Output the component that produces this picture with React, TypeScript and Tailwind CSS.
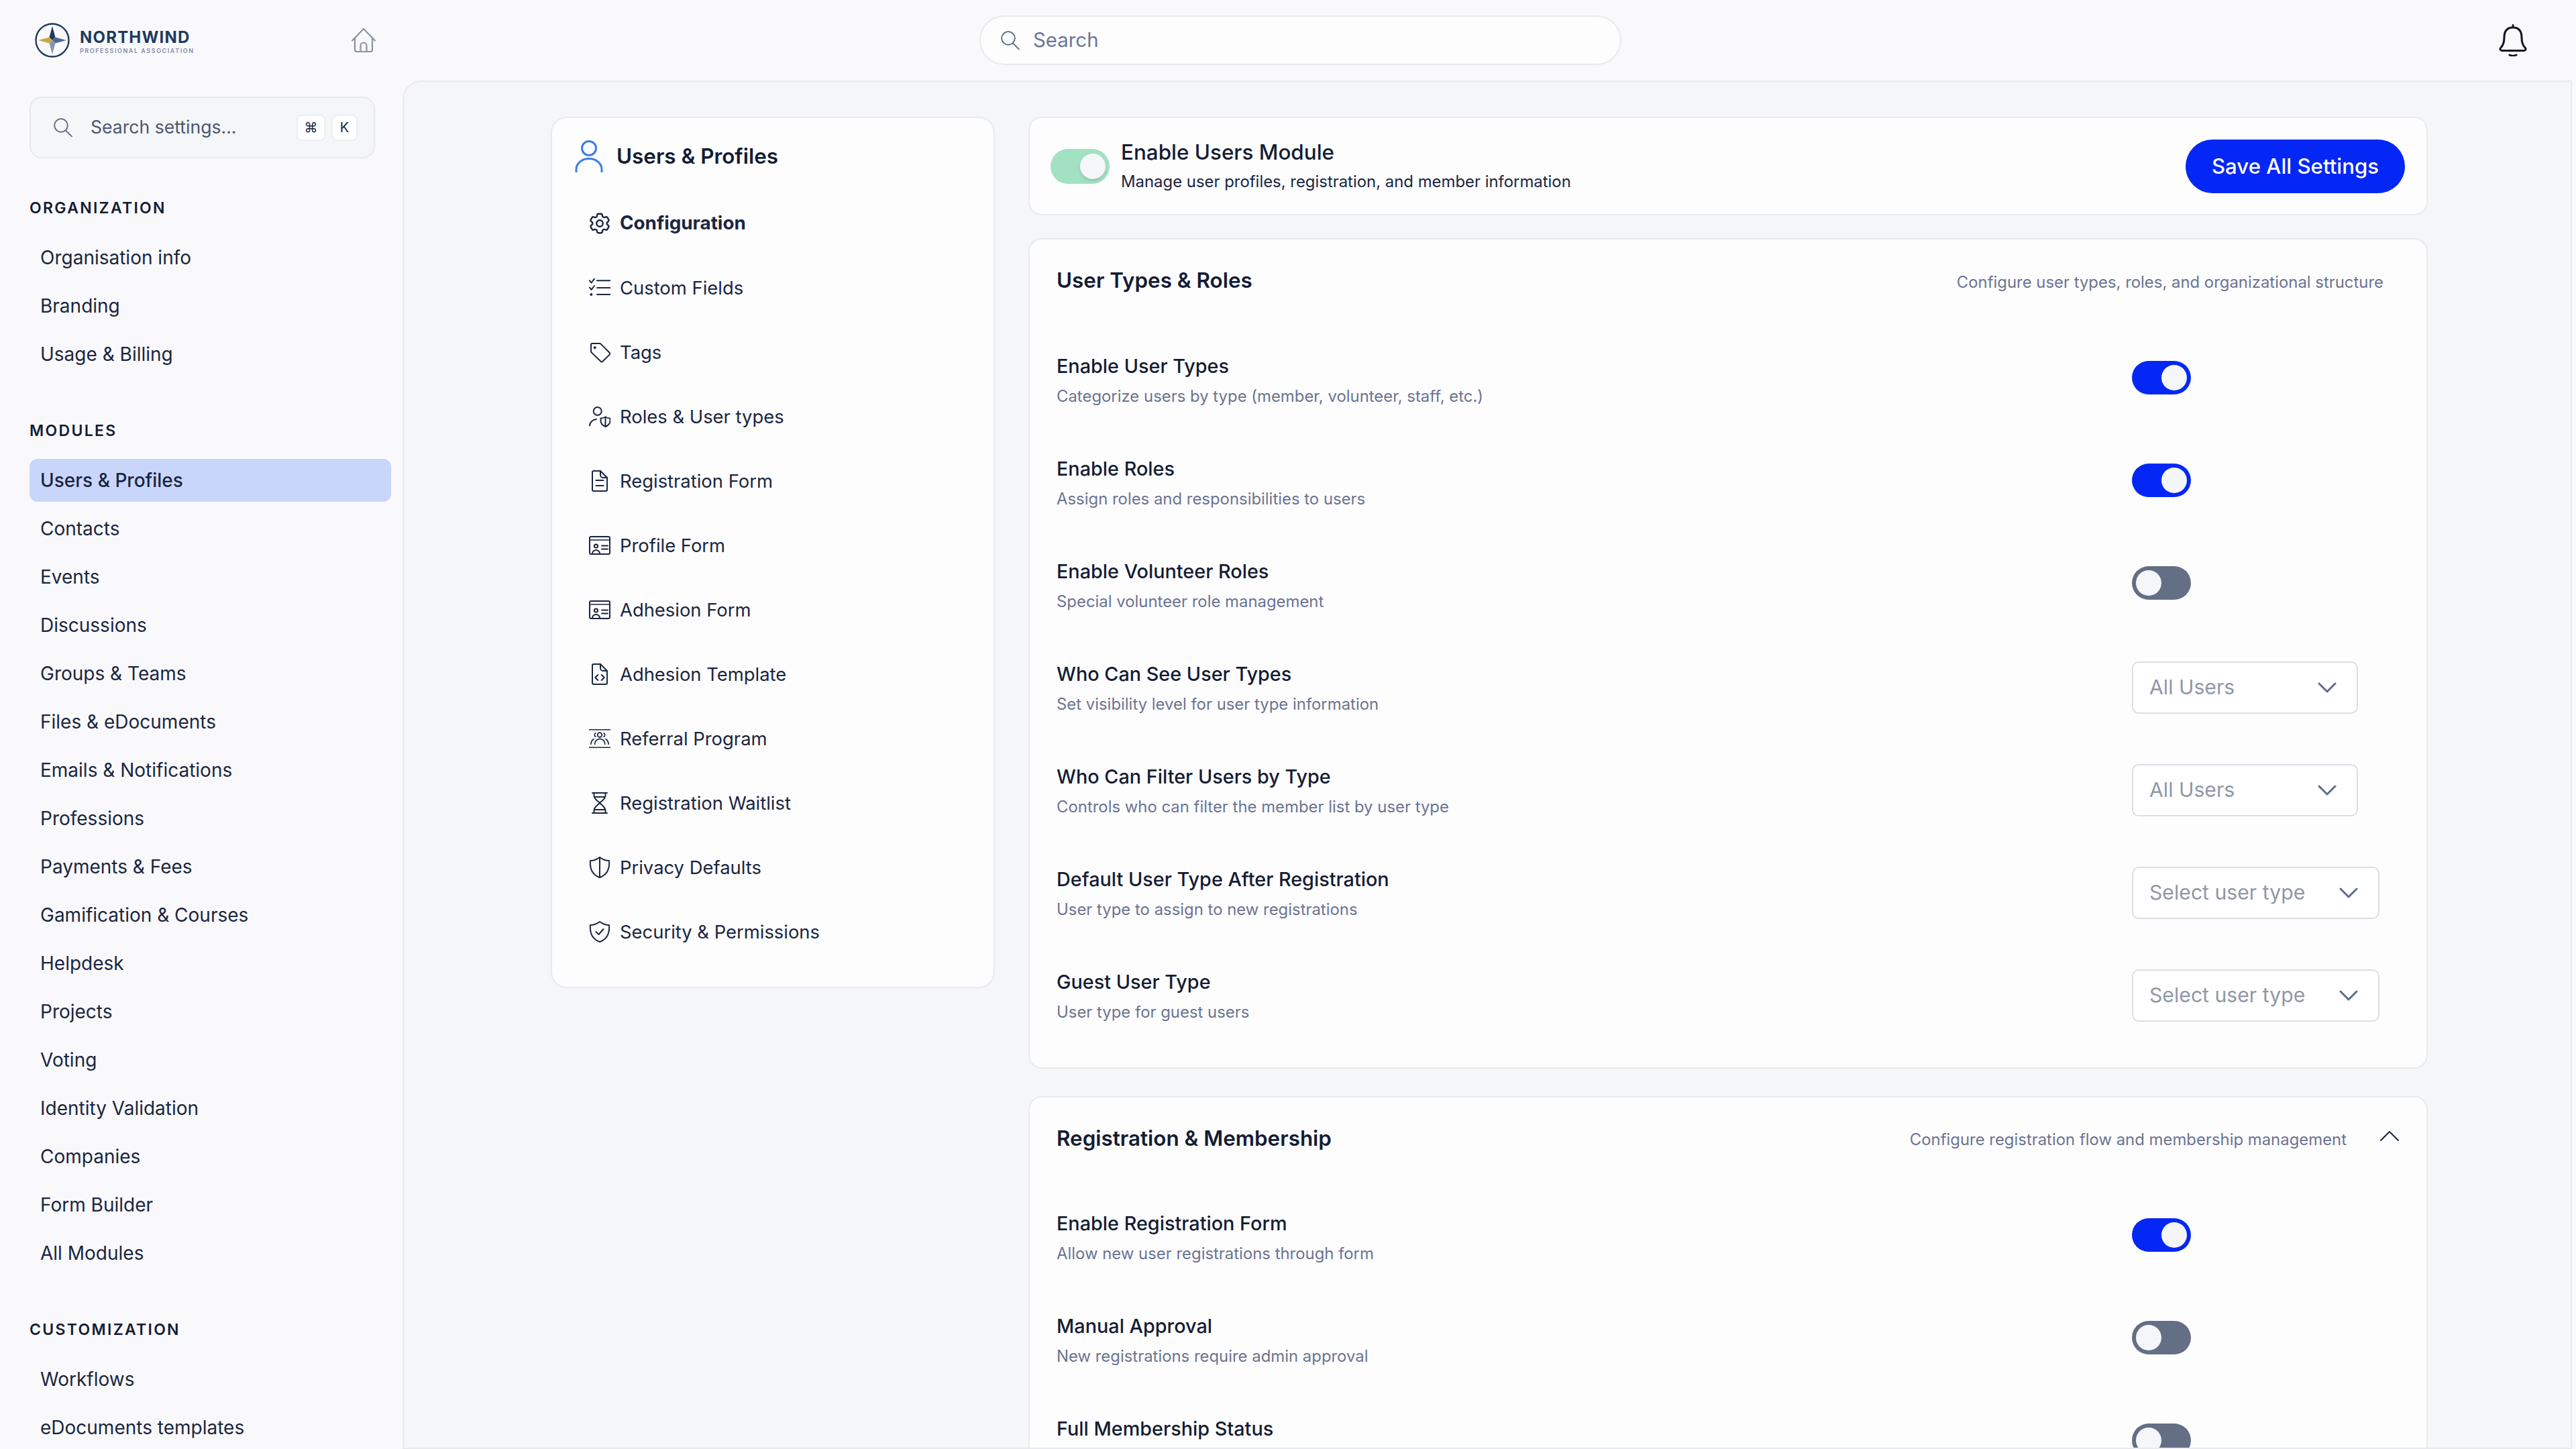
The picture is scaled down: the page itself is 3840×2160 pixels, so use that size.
import type { ReactNode } from "react";
import { HiOutlineCog6Tooth } from "react-icons/hi2";

const orgItems = ["Organisation info", "Branding", "Usage & Billing"];
const moduleItems = [
  "Users & Profiles",
  "Contacts",
  "Events",
  "Discussions",
  "Groups & Teams",
  "Files & eDocuments",
  "Emails & Notifications",
  "Professions",
  "Payments & Fees",
  "Gamification & Courses",
  "Helpdesk",
  "Projects",
  "Voting",
  "Identity Validation",
  "Companies",
  "Form Builder",
  "All Modules",
];
const customItems = ["Workflows", "eDocuments templates"];

function Glyph({ children }: { children: ReactNode }) {
  return (
    <svg viewBox="0 0 32 32" fill="none" stroke="#1a2640" strokeWidth="2" strokeLinecap="round" strokeLinejoin="round" className="h-[32px] w-[32px] shrink-0">
      {children}
    </svg>
  );
}

const docOutline = (
  <>
    <path d="M7 1h10l10 10v18a2 2 0 0 1-2 2H7a2 2 0 0 1-2-2V3a2 2 0 0 1 2-2z" />
    <path d="M17 1v6a4 4 0 0 0 4 4h6" />
  </>
);
const idCard = (
  <>
    <rect x="1" y="3" width="30" height="26" rx="2" />
    <path d="M1 8h30" strokeWidth="1.4" />
    <circle cx="10.5" cy="17" r="2.6" />
    <path d="M5 28a5.5 5 0 0 1 11 0M19 16.5h9M19 21.5h9" />
  </>
);
const shieldOutline = "M16 1C20 4 25 6 30 6C31 18 27 27 16 31C5 27 1 18 2 6C7 6 12 4 16 1Z";

const navItems: { label: string; icon: ReactNode; bold?: boolean }[] = [
  { label: "Configuration", bold: true, icon: <HiOutlineCog6Tooth className="h-[38px] w-[38px] shrink-0 -mx-[3px] text-[#1a2640]" /> },
  {
    label: "Custom Fields",
    icon: (
      <Glyph>
        <path d="M12 5.3h20M12 16h20M12 26h20M1 5.3l2.5 3.2L8 2.7M1 15.5l2.5 3.3L8 13" />
        <circle cx="3.4" cy="26" r="1" fill="#1a2640" />
      </Glyph>
    ),
  },
  {
    label: "Tags",
    icon: (
      <Glyph>
        <path d="M5 3h11a2 2 0 0 1 1.4.6l13.2 13.2a2 2 0 0 1 0 2.8l-10.2 10.2a2 2 0 0 1-2.8 0L3.6 16.4A2 2 0 0 1 3 15V5a2 2 0 0 1 2-2z" />
        <circle cx="8.7" cy="9.3" r="1" fill="#1a2640" />
      </Glyph>
    ),
  },
  {
    label: "Roles & User types",
    icon: (
      <Glyph>
        <circle cx="12.7" cy="8" r="6" />
        <path d="M1 29.5a11 10 0 0 1 10-9.5" />
        <path d="M24.5 16.5C27 18 29 18.6 31.5 18.5V22C31.5 27 28 29.5 24.5 31C21 29.5 17.5 27 17.5 22V18.5C20 18.6 22 18 24.5 16.5ZM24.5 16.5V31" />
      </Glyph>
    ),
  },
  {
    label: "Registration Form",
    icon: (
      <Glyph>
        {docOutline}
        <path d="M10.5 15h11M10.5 23h11" />
      </Glyph>
    ),
  },
  { label: "Profile Form", icon: <Glyph>{idCard}</Glyph> },
  { label: "Adhesion Form", icon: <Glyph>{idCard}</Glyph> },
  {
    label: "Adhesion Template",
    icon: (
      <Glyph>
        {docOutline}
        <path d="M13.3 17l-4 4 4 4M18.7 17l4 4-4 4" />
      </Glyph>
    ),
  },
  {
    label: "Referral Program",
    icon: (
      <Glyph>
        <path d="M0 2.7h32M0 29.3h32" strokeWidth="1.4" />
        <g strokeWidth="1.7">
          <circle cx="16" cy="10.5" r="3.3" />
          <path d="M8.7 24.3a7.5 8 0 0 1 15 0M10 7.8a3 3 0 0 0 0 5.4M22 7.8a3 3 0 0 1 0 5.4M3 24.3c0-3.5 1.5-6 4-7.6M29 24.3c0-3.5-1.5-6-4-7.6" />
        </g>
      </Glyph>
    ),
  },
  {
    label: "Registration Waitlist",
    icon: (
      <Glyph>
        <path d="M5 1h22M5 31h22M7.5 1v4c0 5 5.5 8 8.5 11 3-3 8.5-6 8.5-11V1M7.5 31v-4c0-5 5.5-8 8.5-11 3 3 8.5 6 8.5 11v4M8 7h16M8 26h16" />
      </Glyph>
    ),
  },
  {
    label: "Privacy Defaults",
    icon: (
      <Glyph>
        <path d={shieldOutline} />
        <path d="M16 1v30" />
      </Glyph>
    ),
  },
  {
    label: "Security & Permissions",
    icon: (
      <Glyph>
        <path d={shieldOutline} />
        <path d="M10.5 16l4 4 7-8" />
      </Glyph>
    ),
  },
];

function SearchIcon({ className }: { className: string }) {
  return (
    <svg viewBox="0 0 28 28" fill="none" stroke="currentColor" strokeWidth="1.8" strokeLinecap="round" className={className}>
      <circle cx="11" cy="11" r="9.8" />
      <path d="M18 18.5l9 9" />
    </svg>
  );
}

function Logo() {
  return (
    <div className="flex items-center gap-[15px]">
      <svg viewBox="0 0 52 52" className="h-[52px] w-[52px] shrink-0">
        <circle cx="26" cy="26" r="24.5" fill="none" stroke="#1e3a5f" strokeWidth="2.4" />
        <path d="M26 5l-4.5 16.5L26 26l4.5-4.5z" fill="#1e3a5f" />
        <path d="M47 26l-16.5-4.5L26 26l4.5 4.5z" fill="#4d6a93" />
        <path d="M26 47l4.5-16.5L26 26l-4.5 4.5z" fill="#8397b4" />
        <path d="M5 26l16.5 4.5L26 26l-4.5-4.5z" fill="#cfa644" />
      </svg>
      <div className="flex flex-col pt-[3px]">
        <span className="text-[24px] leading-[26px] font-bold tracking-[1.2px] text-[#1e3a5f]">NORTHWIND</span>
        <span className="mt-[1px] text-[9px] leading-[11px] font-semibold tracking-[1.55px] whitespace-nowrap text-[#7c8ca8]">PROFESSIONAL ASSOCIATION</span>
      </div>
    </div>
  );
}

function SideSection({ title, items, className }: { title: string; items: string[]; className: string }) {
  return (
    <div className={className}>
      <div className="flex h-[32px] items-center text-[23px] font-semibold tracking-[2.3px] text-[#141c33]">{title}</div>
      <div className="mt-[22px]">
        {items.map((item) => (
          <div key={item} className="flex h-[72px] items-center">
            <div className={`flex h-[64px] w-full items-center rounded-[12px] px-[16px] text-[28px] text-[#1a2640] ${item === "Users & Profiles" ? "bg-[#c9d6fb] font-medium" : ""}`}>
              {item}
            </div>
          </div>
        ))}
      </div>
    </div>
  );
}

function Toggle({ on }: { on: boolean }) {
  return (
    <div className={`mb-[10px] flex h-[50px] w-[88px] items-center rounded-full px-[6px] ${on ? "justify-end bg-[#0527f5]" : "justify-start bg-[#646e85]"}`}>
      <div className="h-[38px] w-[38px] rounded-full bg-[#f5f6fa]" />
    </div>
  );
}

function Select({ label, width }: { label: string; width: string }) {
  return (
    <div className={`mb-[4px] flex h-[78px] items-center justify-between rounded-[10px] border-2 border-[#dcdee6] bg-white pr-[30px] pl-[24px] text-[30.2px] text-[#9097a8] ${width}`}>
      <span className="mt-[1px]">{label}</span>
      <svg viewBox="0 0 28 16" fill="none" stroke="#5f6b8a" strokeWidth="3" strokeLinecap="round" strokeLinejoin="round" className="h-[16px] w-[28px]">
        <path d="M2 2l12 12L26 2" />
      </svg>
    </div>
  );
}

function Row({ title, desc, control }: { title: string; desc?: string; control: ReactNode }) {
  return (
    <div className="flex h-[153px] items-center justify-between pr-[39px] pl-[40px]">
      <div className="flex flex-col gap-[11px]">
        <div className="text-[28.8px] leading-[36px] font-medium text-[#141c33]">{title}</div>
        <div className="h-[32px] text-[23.9px] leading-[32px] text-[#6b7491]">{desc}</div>
      </div>
      <div className="flex w-[400px] items-center">{control}</div>
    </div>
  );
}

export default function App() {
  return (
    <div className="flex h-[2160px] w-[3840px] flex-col overflow-hidden bg-[#f9f9fb] [font-family:Inter,sans-serif]">
      <header className="flex h-[120px] shrink-0 items-center">
        <div className="flex w-[600px] shrink-0 items-center justify-between pr-[40px] pl-[52px]">
          <Logo />
          <svg viewBox="0 0 36 36" fill="none" stroke="#8a92a3" strokeWidth="2.2" strokeLinecap="round" strokeLinejoin="round" className="h-[36px] w-[36px]">
            <path d="M1 18.5L18 1l17 17.5M5 15v17a3 3 0 0 0 3 3h20a3 3 0 0 0 3-3V15M13.5 35v-9a4.5 4.5 0 0 1 9 0v9" />
          </svg>
        </div>
        <div className="ml-[860px] flex h-[74px] w-[957px] items-center gap-[20px] rounded-full border-2 border-[#e9eaee] bg-[#fdfdfe] pl-[30px] text-[29.4px] text-[#6b7694]">
          <SearchIcon className="h-[28px] w-[28px] text-[#5f6b80]" />
          Search
        </div>
        <svg viewBox="0 0 42 48" fill="none" stroke="#111520" strokeWidth="3" strokeLinecap="round" strokeLinejoin="round" className="ml-[1308px] h-[48px] w-[42px]">
          <path d="M21 1.5V5C11 5 8 12 8 20C8 28 6 32 3 35C1 37 2 39.5 5 39.5H37C40 39.5 41 37 39 35C36 32 34 28 34 20C34 12 31 5 21 5" />
          <path d="M16 46q5 2.5 10 0" />
        </svg>
      </header>

      <div className="flex min-h-0 flex-1">
        <aside className="w-[600px] shrink-0 overflow-hidden pr-[17px] pl-[44px]">
          <div className="mt-[24px] flex h-[92px] w-[515px] items-center rounded-[18px] border-2 border-[#e8e9ee] bg-[#f5f6f8] pr-[24px] pl-[34px]">
            <SearchIcon className="h-[28px] w-[28px] shrink-0 text-[#5f6b80]" />
            <span className="ml-[27px] flex-1 text-[26.6px] text-[#4c5670]">Search settings...</span>
            <span className="flex h-[39px] w-[43px] items-center justify-center rounded-[8px] border-2 border-[#eceef2] bg-white text-[20px] text-[#1a2640]">⌘</span>
            <span className="ml-[9px] flex h-[39px] w-[39px] items-center justify-center rounded-[8px] border-2 border-[#eceef2] bg-white text-[20px] text-[#1a2640]">K</span>
          </div>
          <SideSection title="ORGANIZATION" items={orgItems} className="mt-[58px]" />
          <SideSection title="MODULES" items={moduleItems} className="mt-[62px]" />
          <SideSection title="CUSTOMIZATION" items={customItems} className="mt-[62px]" />
        </aside>

        <main className="mr-[6px] flex min-w-0 flex-1 items-start gap-[50px] overflow-hidden rounded-tl-[28px] border-2 border-[#e9eaee] bg-[#f5f6f8] pt-[52px] pl-[219px]">
          <nav className="w-[662px] shrink-0 rounded-[24px] border-2 border-[#e9eaee] bg-[#fdfdfe] pb-[34px]">
            <div className="mb-[28px] flex items-center gap-[20px] pt-[32px] pl-[34px]">
              <svg viewBox="0 0 42 48" fill="none" stroke="#3b7de8" strokeWidth="3" strokeLinecap="round" className="h-[48px] w-[42px]">
                <circle cx="21" cy="12" r="10.5" />
                <path d="M2 47v-3.5a19 16 0 0 1 38 0V47" />
              </svg>
              <span className="mt-[2px] text-[31.4px] font-semibold text-[#141c33]">Users &amp; Profiles</span>
            </div>
            {navItems.map((item) => (
              <div key={item.label} className={`flex h-[96px] items-center gap-[14px] pl-[55px] text-[#1a2640] ${item.bold ? "text-[27.8px] font-bold" : "text-[27.4px]"}`}>
                {item.icon}
                {item.label}
              </div>
            ))}
          </nav>

          <div className="w-[2086px] shrink-0">
            <section className="mb-[34px] flex h-[147px] items-center justify-between rounded-[20px] border-2 border-[#e9eaee] bg-[#fdfdfe] pr-[32px] pl-[31px]">
              <div className="flex items-center gap-[17px]">
                <div className="flex h-[52px] w-[88px] items-center justify-end rounded-full bg-[#a3e1c3] pr-[6px]">
                  <div className="h-[38px] w-[38px] rounded-full bg-[#f5f6fa] shadow-md" />
                </div>
                <div className="flex flex-col gap-[8px]">
                  <div className="-mt-[2px] text-[31.4px] leading-[40px] font-medium text-[#141c33]">Enable Users Module</div>
                  <div className="text-[23.9px] leading-[32px] text-[#1a2640]">Manage user profiles, registration, and member information</div>
                </div>
              </div>
              <button className="flex h-[80px] w-[327px] items-center justify-center rounded-full bg-[#0527f5] pt-[1px] text-[31.2px] font-medium text-white">Save All Settings</button>
            </section>

            <section className="mb-[41px] rounded-[20px] border-2 border-[#e9eaee] bg-[#fdfdfe] pb-[29px]">
              <div className="mt-[42px] mb-[52px] flex h-[40px] items-center justify-between pr-[64px] pl-[40px]">
                <h2 className="text-[31.4px] font-semibold text-[#141c33]">User Types &amp; Roles</h2>
                <span className="mt-[3px] text-[23.9px] text-[#6b7491]">Configure user types, roles, and organizational structure</span>
              </div>
              <Row title="Enable User Types" desc="Categorize users by type (member, volunteer, staff, etc.)" control={<Toggle on />} />
              <Row title="Enable Roles" desc="Assign roles and responsibilities to users" control={<Toggle on />} />
              <Row title="Enable Volunteer Roles" desc="Special volunteer role management" control={<Toggle on={false} />} />
              <Row title="Who Can See User Types" desc="Set visibility level for user type information" control={<Select label="All Users" width="w-[337px]" />} />
              <Row title="Who Can Filter Users by Type" desc="Controls who can filter the member list by user type" control={<Select label="All Users" width="w-[337px]" />} />
              <Row title="Default User Type After Registration" desc="User type to assign to new registrations" control={<Select label="Select user type" width="w-[369px]" />} />
              <Row title="Guest User Type" desc="User type for guest users" control={<Select label="Select user type" width="w-[369px]" />} />
            </section>

            <section className="rounded-[20px] border-2 border-[#e9eaee] bg-[#fdfdfe]">
              <div className="mt-[42px] mb-[51px] flex h-[40px] items-center justify-between pr-[41px] pl-[40px]">
                <h2 className="text-[31.4px] font-semibold text-[#141c33]">Registration &amp; Membership</h2>
                <div className="flex items-center gap-[50px]">
                  <span className="mt-[2px] text-[23.9px] text-[#6b7491]">Configure registration flow and membership management</span>
                  <svg viewBox="0 0 28 16" fill="none" stroke="#1a2640" strokeWidth="2" strokeLinecap="round" strokeLinejoin="round" className="mb-[10px] h-[16px] w-[28px]">
                    <path d="M1 15L14 2l13 13" />
                  </svg>
                </div>
              </div>
              <Row title="Enable Registration Form" desc="Allow new user registrations through form" control={<Toggle on />} />
              <Row title="Manual Approval" desc="New registrations require admin approval" control={<Toggle on={false} />} />
              <Row title="Full Membership Status" control={<Toggle on={false} />} />
            </section>
          </div>
        </main>
      </div>
    </div>
  );
}
